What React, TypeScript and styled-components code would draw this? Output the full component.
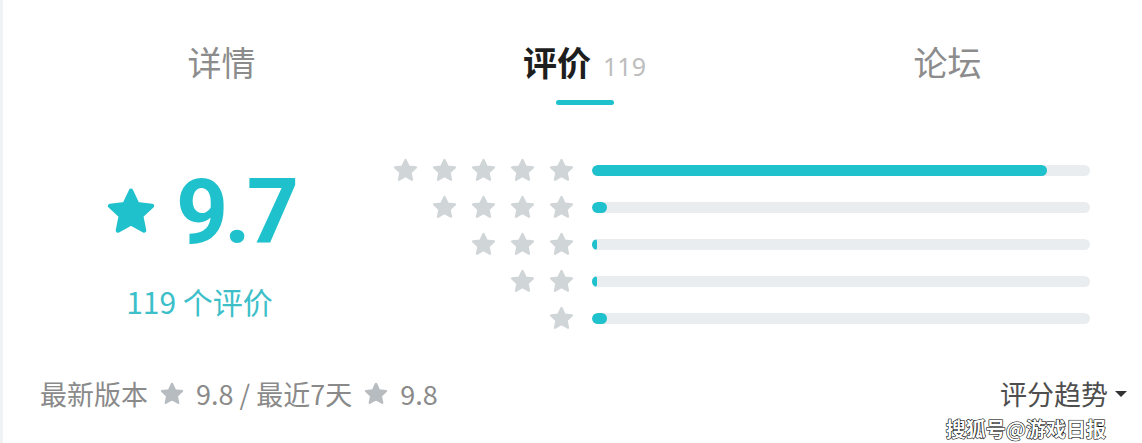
import styled, { createGlobalStyle } from 'styled-components';

const GlobalStyle = createGlobalStyle`
  html, body {
    margin: 0;
    padding: 0;
    background: #ffffff;
  }
  body {
    font-family: 'Noto Sans CJK SC', 'Noto Sans', sans-serif;
  }
`;

// 별점 분포 데이터 -------------------------------------------------

const distribution = [
  { stars: 5, percent: 91.4 },
  { stars: 4, percent: 3 },
  { stars: 3, percent: 1 },
  { stars: 2, percent: 1 },
  { stars: 1, percent: 3 },
];

const tabs = [
  { label: '详情', active: false },
  { label: '评价', active: true, count: 119 },
  { label: '论坛', active: false },
];

function Star({ size, color }: { size: number; color: string }) {
  return (
    <svg width={size} height={size} viewBox='0 0 24 24'>
      <polygon
        points='12,2.6 14.8,8.5 21.3,9.3 16.5,13.7 17.8,20.2 12,17 6.2,20.2 7.5,13.7 2.7,9.3 9.2,8.5'
        fill={color}
        stroke={color}
        strokeWidth='2'
        strokeLinejoin='round'
      />
    </svg>
  );
}

function App() {
  return (
    <Page>
      <GlobalStyle />
      <TabBar>
        {tabs.map((tab) => (
          <Tab key={tab.label}>
            <TabLabel $active={tab.active}>
              {tab.label}
              {tab.count && <TabCount>{tab.count}</TabCount>}
            </TabLabel>
            {tab.active && <Indicator />}
          </Tab>
        ))}
      </TabBar>

      <Main>
        <Summary>
          <ScoreRow>
            <Star size={54} color='#1fc1cc' />
            <Score>9.7</Score>
          </ScoreRow>
          <CountText>119 个评价</CountText>
        </Summary>

        <Distribution>
          {distribution.map((row) => (
            <BarRow key={row.stars}>
              <StarGroup>
                {Array.from({ length: row.stars }).map((_, i) => (
                  <Star key={i} size={27} color='#d0d5d8' />
                ))}
              </StarGroup>
              <Track>
                <Fill style={{ width: `${row.percent}%` }} />
              </Track>
            </BarRow>
          ))}
        </Distribution>
      </Main>

      <Footer>
        <Recent>
          最新版本
          <Star size={26} color='#b7bcc0' />
          <span>9.8 / 最近7天</span>
          <Star size={26} color='#b7bcc0' />
          9.8
        </Recent>
        <Trend>
          评分趋势
          <Caret />
        </Trend>
      </Footer>

      <Watermark>搜狐号@游戏日报</Watermark>
    </Page>
  );
}

export default App;

const Page = styled.div`
  width: 1142px;
  height: 443px;
  box-sizing: border-box;
  border-left: 3px solid #f1f2f3;
  position: relative;
  display: flex;
  flex-direction: column;
  overflow: hidden;
`;

const TabBar = styled.div`
  display: grid;
  grid-template-columns: repeat(3, 363px);
  padding: 42px 0 0 37px;
  height: 107px;
  box-sizing: border-box;
`;

const Tab = styled.div`
  display: flex;
  flex-direction: column;
  align-items: center;
`;

const TabLabel = styled.div<{ $active: boolean }>`
  display: flex;
  align-items: baseline;
  font-size: 34px;
  line-height: 40px;
  font-weight: ${(p) => (p.$active ? 700 : 400)};
  color: ${(p) => (p.$active ? '#1e1e1e' : '#8c8c8c')};
`;

const TabCount = styled.span`
  font-family: 'Noto Sans', sans-serif;
  font-size: 25px;
  font-weight: 400;
  color: #bdbdbd;
  margin-left: 12px;
`;

const Indicator = styled.div`
  width: 58px;
  height: 5px;
  border-radius: 3px;
  background: #1fc1cc;
  margin-top: 14px;
`;

const Main = styled.div`
  display: flex;
  margin-top: 45px;
  height: 185px;
`;

const Summary = styled.div`
  width: 319px;
  padding-left: 37px;
  display: flex;
  flex-direction: column;
  align-items: center;
`;

const ScoreRow = styled.div`
  display: flex;
  align-items: center;
  gap: 18px;
  height: 100px;
  margin-top: 10px;
`;

const Score = styled.div`
  font-family: Roboto, 'Liberation Sans', sans-serif;
  font-size: 91px;
  line-height: 100px;
  font-weight: 700;
  letter-spacing: -4px;
  color: #1fc1cc;
`;

const CountText = styled.div`
  margin-top: 20px;
  font-size: 30px;
  line-height: 38px;
  color: #3cbfc9;
`;

const Distribution = styled.div`
  flex: 1;
  display: flex;
  flex-direction: column;
`;

const BarRow = styled.div`
  height: 37px;
  display: flex;
  align-items: center;
`;

const StarGroup = styled.div`
  width: 216px;
  display: flex;
  justify-content: flex-end;
  gap: 12px;
`;

const Track = styled.div`
  width: 498px;
  height: 11px;
  margin-left: 17px;
  border-radius: 6px;
  background: #eaedef;
  overflow: hidden;
`;

const Fill = styled.div`
  height: 100%;
  min-width: 5px;
  border-radius: 6px;
  background: #1fc1cc;
`;

const Footer = styled.div`
  display: flex;
  justify-content: space-between;
  align-items: center;
  margin-top: 42px;
  padding: 0 15px 0 37px;
`;

const Recent = styled.div`
  display: flex;
  align-items: center;
  gap: 11px;
  font-size: 27px;
  line-height: 30px;
  color: #8a8a8a;
`;

const Trend = styled.div`
  display: flex;
  align-items: center;
  gap: 7px;
  font-size: 27px;
  line-height: 30px;
  color: #4e4e4e;
`;

const Caret = styled.span`
  width: 0;
  height: 0;
  border-left: 6px solid transparent;
  border-right: 6px solid transparent;
  border-top: 6px solid #333;
`;

const Watermark = styled.div`
  position: absolute;
  right: 36px;
  bottom: 4px;
  font-size: 20px;
  line-height: 20px;
  font-weight: 700;
  color: #ffffff;
  -webkit-text-stroke: 1px #000;
  paint-order: stroke fill;
  text-shadow: 0 0 1px #000;
`;
